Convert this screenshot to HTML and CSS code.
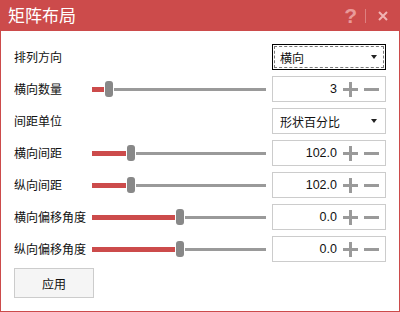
FILE: index.html
```html
<!DOCTYPE html>
<html lang="zh-CN">
<head>
    <meta charset="UTF-8">
    <title>矩阵布局</title>
    <link rel="stylesheet" href="styles.css">
</head>
<body>
    <div class="dialog">
        <div class="titlebar">
            <span class="title">矩阵布局</span>
            <div class="title-tools">
                <span class="help">?</span>
                <span class="sep"></span>
                <svg class="close" width="10" height="10" viewBox="0 0 10 10">
                    <path d="M1 1L9 9M9 1L1 9" stroke="#f0b4b4" stroke-width="2"/>
                </svg>
            </div>
        </div>
        <div class="content">
            <div class="grid">
                <label>排列方向</label>
                <div></div>
                <div class="select focused"><span>横向</span><span class="arrow"></span></div>

                <label>横向数量</label>
                <div class="slider"><span class="fill" style="width: 12px"></span><span class="thumb"></span><span class="rest"></span></div>
                <div class="spin"><span class="val">3</span><span class="plus"></span><span class="minus"></span></div>

                <label>间距单位</label>
                <div></div>
                <div class="select"><span>形状百分比</span><span class="arrow"></span></div>

                <label>横向间距</label>
                <div class="slider"><span class="fill" style="width: 34px"></span><span class="thumb"></span><span class="rest"></span></div>
                <div class="spin"><span class="val">102.0</span><span class="plus"></span><span class="minus"></span></div>

                <label>纵向间距</label>
                <div class="slider"><span class="fill" style="width: 34px"></span><span class="thumb"></span><span class="rest"></span></div>
                <div class="spin"><span class="val">102.0</span><span class="plus"></span><span class="minus"></span></div>

                <label>横向偏移角度</label>
                <div class="slider"><span class="fill" style="width: 83px"></span><span class="thumb"></span><span class="rest"></span></div>
                <div class="spin"><span class="val">0.0</span><span class="plus"></span><span class="minus"></span></div>

                <label>纵向偏移角度</label>
                <div class="slider"><span class="fill" style="width: 83px"></span><span class="thumb"></span><span class="rest"></span></div>
                <div class="spin"><span class="val">0.0</span><span class="plus"></span><span class="minus"></span></div>
            </div>
            <button class="apply">应用</button>
        </div>
    </div>
</body>
</html>
```
FILE: styles.css
```css
body {
    margin: 0;
    font-family: "Noto Sans CJK SC", "Noto Sans", sans-serif;
    font-size: 12px;
    color: #111;
    background: #fff;
}
.dialog {
    width: 400px;
    height: 312px;
    box-sizing: border-box;
    border: 1px solid #cc4b4b;
    border-top: none;
    display: flex;
    flex-direction: column;
}
.titlebar {
    height: 31px;
    background: #cc4b4b;
    margin: 0 -1px;
    display: flex;
    align-items: center;
    justify-content: space-between;
    padding: 0 12px 0 8px;
    flex-shrink: 0;
}
.title {
    color: #fff;
    font-size: 17px;
    line-height: 20px;
    margin-top: -1px;
}
.title-tools {
    display: flex;
    align-items: center;
}
.help {
    color: #e99a9a;
    font-family: "Liberation Sans", sans-serif;
    font-weight: bold;
    font-size: 21px;
    line-height: 20px;
}
.sep {
    width: 1px;
    height: 14px;
    background: #dd8080;
    margin: 0 12px 0 8px;
}
.close {
    display: block;
}
.content {
    padding: 13px 0 0 13px;
}
.grid {
    display: grid;
    grid-template-columns: 72px 174px 114px;
    column-gap: 6px;
    row-gap: 6px;
    grid-auto-rows: 26px;
    align-items: center;
}
label {
    line-height: 26px;
    white-space: nowrap;
}
.select {
    height: 26px;
    box-sizing: border-box;
    border: 1px solid #ccc;
    display: flex;
    align-items: center;
    justify-content: space-between;
    padding: 0 8px 0 7px;
}
.select.focused {
    border-color: #000;
    outline: 1px dashed #777;
    outline-offset: -3px;
}
.arrow {
    width: 0;
    height: 0;
    border-left: 3px solid transparent;
    border-right: 3px solid transparent;
    border-top: 4px solid #222;
}
.slider {
    display: flex;
    align-items: center;
    gap: 1px;
    height: 26px;
}
.fill {
    height: 5px;
    background: #cc4b4b;
}
.thumb {
    width: 8px;
    height: 16px;
    border-radius: 3px;
    background: #888;
}
.rest {
    flex: 1;
    height: 3px;
    background: #9a9a9a;
}
.spin {
    height: 26px;
    box-sizing: border-box;
    border: 1px solid #ccc;
    display: flex;
    align-items: center;
    justify-content: flex-end;
    padding-right: 6px;
}
.val {
    font-family: "Liberation Sans", sans-serif;
    font-size: 12.5px;
    margin-right: 6px;
}
.plus, .minus {
    position: relative;
    width: 15px;
    height: 15px;
}
.plus::before, .plus::after, .minus::before {
    content: "";
    position: absolute;
    background: #9a9a9a;
}
.plus::before {
    left: 0;
    top: 6px;
    width: 15px;
    height: 3px;
}
.plus::after {
    left: 6px;
    top: 0;
    width: 3px;
    height: 15px;
}
.minus {
    margin-left: 6px;
}
.minus::before {
    left: 0;
    top: 6px;
    width: 15px;
    height: 3px;
}
.apply {
    margin-top: 6px;
    width: 80px;
    height: 30px;
    background: #f5f5f5;
    border: 1px solid #ccc;
    font-family: inherit;
    font-size: 12px;
    color: #111;
    padding: 0;
}
```
